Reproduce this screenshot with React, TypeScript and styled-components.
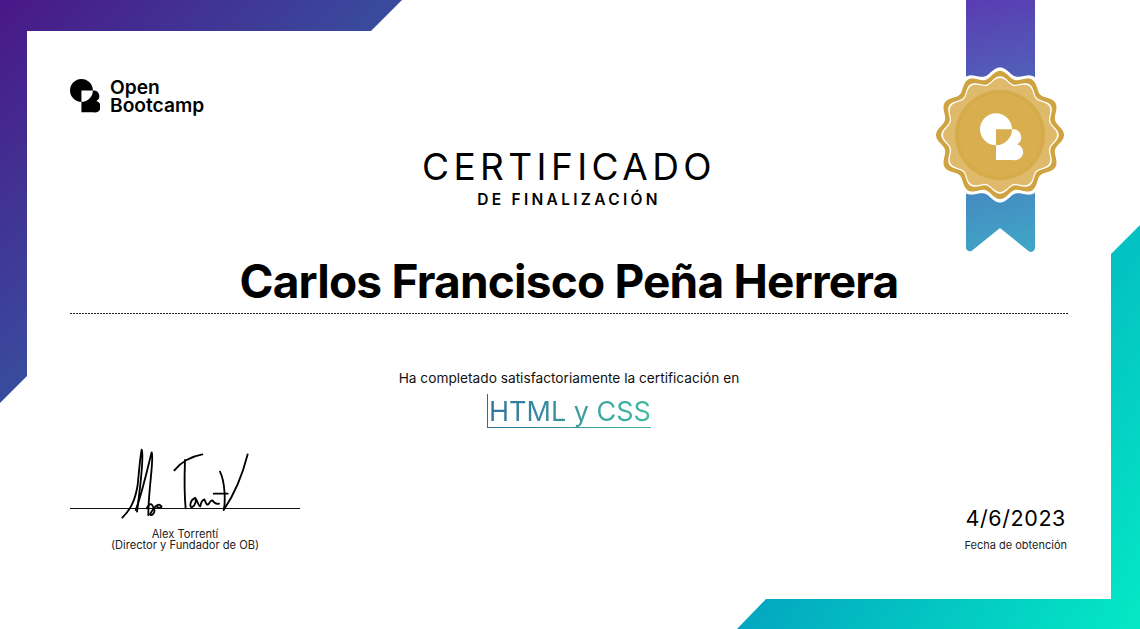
import React from 'react';
import styled, {createGlobalStyle} from 'styled-components';

const GlobalStyle = createGlobalStyle`
  html, body {
    margin: 0;
    padding: 0;
    background: white;
  }
  body {
    font-family: Inter, "Liberation Sans", sans-serif;
    color: #000;
  }
`

const Page = styled.div`
  position: relative;
  width: 1140px;
  height: 629px;
  overflow: hidden;
  background: white;
  box-sizing: border-box;
  padding: 79px 72px 0 70px;
  display: flex;
  flex-direction: column;
`

const Corner = styled.svg`
  position: absolute;
  left: 0;
  top: 0;
  width: 1140px;
  height: 629px;
  pointer-events: none;
`

const Medal = styled.svg`
  position: absolute;
  left: 930px;
  top: 0;
  width: 140px;
  height: 256px;
`

const Brand = styled.div`
  display: flex;
  align-items: flex-start;
  gap: 10px;
  position: relative;
  height: 37px;
  >svg{
    width: 30px;
    height: 33.5px;
  }
`

const BrandName = styled.div`
  font-family: Inter, sans-serif;
  font-weight: 600;
  font-size: 19.2px;
  line-height: 18px;
  margin-top: -1px;
`

const Heading = styled.div`
  margin-top: 29px;
  display: flex;
  flex-direction: column;
  align-items: center;
  >h1{
    margin: 0;
    font-weight: 400;
    font-size: 37px;
    line-height: 44px;
    letter-spacing: 4.4px;
  }
  >h2{
    margin: 2px 0 0;
    font-weight: 600;
    font-size: 15.5px;
    line-height: 18px;
    letter-spacing: 3.3px;
  }
`

const Recipient = styled.div`
  margin-top: 44px;
  padding-bottom: 4px;
  text-align: center;
  font-weight: 700;
  font-size: 46px;
  line-height: 56px;
  letter-spacing: -0.8px;
`

const Divider = styled.div`
  height: 1px;
  background: repeating-linear-gradient(90deg, #222 0 2px, transparent 2px 3px);
`

const Completed = styled.p`
  margin: 55px 0 0;
  text-align: center;
  font-size: 13.7px;
  line-height: 18px;
  color: #111;
`

const CourseRow = styled.div`
  margin-top: 7px;
  display: flex;
  justify-content: center;
`

const Course = styled.div`
  border-style: solid;
  border-width: 0 0 1px 1px;
  border-image: linear-gradient(90deg, #2b6c97, #40b8a2) 1;
  font-size: 27px;
  line-height: 33px;
  padding: 1px 0 0 1px;
  height: 32px;
  >span{
    background: linear-gradient(90deg, #33739f, #41bb9f);
    -webkit-background-clip: text;
    background-clip: text;
    color: transparent;
  }
`

const Footer = styled.div`
  margin-top: 23px;
  display: flex;
  justify-content: space-between;
  align-items: flex-start;
`

const SignatureBlock = styled.div`
  position: relative;
  width: 230px;
  padding-top: 57px;
  text-align: center;
  font-size: 11.15px;
  line-height: 11px;
  color: #222;
`

const SignatureLine = styled.div`
  height: 1px;
  background: #111;
  margin-bottom: 20px;
`

const Signature = styled.svg`
  position: absolute;
  left: 45px;
  top: -6px;
  width: 140px;
  height: 80px;
`

const DateBlock = styled.div`
  padding: 54px 1px 0 0;
  display: flex;
  flex-direction: column;
  align-items: flex-end;
  >strong{
    font-weight: 400;
    font-size: 21.5px;
    line-height: 26px;
    letter-spacing: 0.6px;
    margin-right: 1px;
  }
  >span{
    margin-top: 7px;
    font-size: 11px;
    line-height: 14px;
    color: #222;
  }
`

// scalloped ring around the medal centre, 12 lobes
const wavyPath = (radius: number, amp: number) => {
  const pts: string[] = []
  for (let i = 0; i < 360; i++) {
    const a = (i * Math.PI) / 180
    const r = radius + amp * Math.cos(12 * a)
    const x = 70 + r * Math.sin(a)
    const y = 135 - r * Math.cos(a)
    pts.push(`${x.toFixed(2)} ${y.toFixed(2)}`)
  }
  return `M${pts.join('L')}Z`
}

const markPath = 'M16 0A16 16 0 1 0 16 32A16 16 0 1 0 16 0Z' +
  'M16 16H33A8 8 0 0 1 37 31A8 8 0 0 1 33 46.7H16Z'

const App: React.FC = () => {
  return (
    <Page>
      <GlobalStyle/>
      <Corner viewBox={'0 0 1140 629'}>
        <defs>
          <linearGradient id={'topFrame'} gradientUnits={'userSpaceOnUse'} x1={0} y1={0} x2={220} y2={220}>
            <stop offset={0} stopColor={'#4a1788'}/>
            <stop offset={1} stopColor={'#37509f'}/>
          </linearGradient>
          <linearGradient id={'bottomFrame'} gradientUnits={'userSpaceOnUse'} x1={737} y1={629} x2={1033} y2={807}>
            <stop offset={0} stopColor={'#03a7c0'}/>
            <stop offset={1} stopColor={'#04e9c5'}/>
          </linearGradient>
        </defs>
        <polygon fill={'url(#topFrame)'} points={'0,0 402,0 371,31 27,31 27,376 0,403'}/>
        <polygon fill={'url(#bottomFrame)'} points={'1140,225 1140,629 737,629 766,599 1111,599 1111,254'}/>
      </Corner>

      <Medal viewBox={'0 0 140 256'}>
        <defs>
          <linearGradient id={'ribbon'} gradientUnits={'userSpaceOnUse'} x1={40} y1={0} x2={95} y2={250}>
            <stop offset={0} stopColor={'#5a3cb2'}/>
            <stop offset={1} stopColor={'#3fa6c6'}/>
          </linearGradient>
        </defs>
        <path fill={'url(#ribbon)'} d={'M36 0H105V248A4 4 0 0 1 98.500 251L70 228L41.500 251A4 4 0 0 1 36 248Z'}/>
        <path fill={'#fff'} d={wavyPath(64, 3.5)}/>
        <path fill={'#cfa33f'} d={wavyPath(60.500, 3.5)}/>
        <path fill={'#fff'} d={wavyPath(55.500, 3.2)}/>
        <path fill={'#dfba6b'} d={wavyPath(54, 3)}/>
        <circle cx={70} cy={135} r={45} fill={'#d4a948'}/>
        <circle cx={70} cy={135} r={44} fill={'#d9ae4e'}/>
        <circle cx={70} cy={135} r={42.500} fill={'none'} stroke={'#cfa341'} strokeWidth={0.7}/>
        <path fill={'#fff'} fillRule={'evenodd'} transform={'translate(50 113.300)'} d={markPath}/>
      </Medal>

      <Brand>
        <svg viewBox={'0 0 42 47'}>
          <path fillRule={'evenodd'} d={markPath}/>
        </svg>
        <BrandName>Open<br/>Bootcamp</BrandName>
      </Brand>

      <Heading>
        <h1>CERTIFICADO</h1>
        <h2>DE FINALIZACIÓN</h2>
      </Heading>

      <Recipient>Carlos Francisco Peña Herrera</Recipient>
      <Divider/>

      <Completed>Ha completado satisfactoriamente la certificación en</Completed>
      <CourseRow>
        <Course><span>HTML y CSS</span></Course>
      </CourseRow>

      <Footer>
        <SignatureBlock>
          <SignatureLine/>
          Alex Torrentí<br/>(Director y Fundador de OB)
          <Signature viewBox={'0 0 420 240'} fill={'none'} stroke={'#000'} strokeWidth={5.5} strokeLinecap={'round'} strokeLinejoin={'round'}>
            <path d={'M22 218C45 195 60 170 68 120C72 80 76 30 80 14C86 30 78 110 66 200'}/>
            <path d={'M62 195C80 150 100 60 110 22C118 40 100 130 100 210'}/>
            <path d={'M95 190C105 170 112 175 118 195C120 205 108 215 105 208C115 190 125 175 135 180C148 188 130 190 125 185'}/>
            <path d={'M178 76C195 55 225 35 262 28'}/>
            <path d={'M210 45C208 100 208 150 212 190'}/>
            <path d={'M238 160C225 165 222 190 232 186C242 180 245 165 240 158C248 165 250 185 256 184C258 170 262 165 268 163C272 172 275 182 280 178C285 170 288 165 292 166C298 175 305 178 312 176'}/>
            <path d={'M296 146H338'}/>
            <path d={'M315 80C330 110 332 170 326 195C350 160 380 100 398 28'}/>
          </Signature>
        </SignatureBlock>
        <DateBlock>
          <strong>4/6/2023</strong>
          <span>Fecha de obtención</span>
        </DateBlock>
      </Footer>
    </Page>
  )
}

export default App
